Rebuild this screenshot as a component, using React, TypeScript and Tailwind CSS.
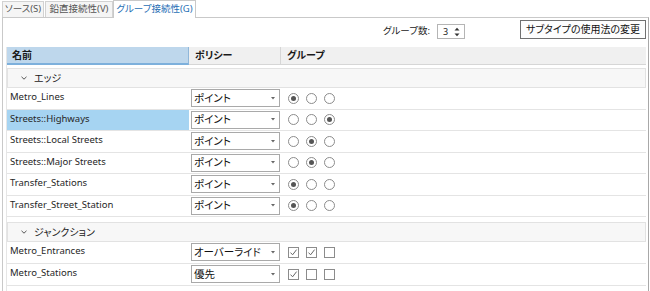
import React from "react";

type Row = { name: string; policy: string; kind: "radio" | "check"; vals: boolean[]; sel?: boolean };

const edges: Row[] = [
  { name: "Metro_Lines", policy: "ポイント", kind: "radio", vals: [true, false, false] },
  { name: "Streets::Highways", policy: "ポイント", kind: "radio", vals: [false, false, true], sel: true },
  { name: "Streets::Local Streets", policy: "ポイント", kind: "radio", vals: [false, true, false] },
  { name: "Streets::Major Streets", policy: "ポイント", kind: "radio", vals: [false, true, false] },
  { name: "Transfer_Stations", policy: "ポイント", kind: "radio", vals: [true, false, false] },
  { name: "Transfer_Street_Station", policy: "ポイント", kind: "radio", vals: [true, false, false] },
];

const junctions: Row[] = [
  { name: "Metro_Entrances", policy: "オーバーライド", kind: "check", vals: [true, true, false] },
  { name: "Metro_Stations", policy: "優先", kind: "check", vals: [true, false, false] },
];

function Radio({ on }: { on: boolean }) {
  return (
    <span className="flex h-[11px] w-[11px] items-center justify-center rounded-full border border-[#8c8c8c] bg-white">
      {on && <span className="h-[5px] w-[5px] rounded-full bg-[#555]" />}
    </span>
  );
}

function Check({ on }: { on: boolean }) {
  return (
    <span className="flex h-[11px] w-[11px] items-center justify-center border border-[#8c8c8c] bg-white">
      {on && (
        <svg width="9" height="9" viewBox="0 0 9 9">
          <path d="M1.5 4.6 L3.6 6.8 L7.6 1.6" fill="none" stroke="#666" strokeWidth="1" />
        </svg>
      )}
    </span>
  );
}

function Select({ text }: { text: string }) {
  return (
    <div className="flex h-[18px] w-[89px] items-center justify-between border border-[#a9a9a9] bg-white pl-[2px] pr-[4px]">
      <span className="text-[10.5px] leading-none text-[#111]">{text}</span>
      <svg width="4" height="3" viewBox="0 0 4 3">
        <path d="M0 0 L4 0 L2 2.6 Z" fill="#666" />
      </svg>
    </div>
  );
}

function GroupHeader({ label }: { label: string }) {
  return (
    <div className="flex h-[20px] items-center border border-[#e2e2e2] bg-[#f7f7f7]">
      <svg width="6" height="4" viewBox="0 0 6 4" className="ml-[13px]">
        <path d="M0.5 0.8 L3 3.2 L5.5 0.8" fill="none" stroke="#555" strokeWidth="1" />
      </svg>
      <span className="ml-[7px] text-[10px] text-[#1a1a1a]">{label}</span>
    </div>
  );
}

function DataRow({ r, h }: { r: Row; h: string }) {
  return (
    <div className={`flex border-b border-[#e4e4e4] ${h}`}>
      <div className={`w-[182px] pl-[3px] pt-[2px] text-[9.5px] leading-[14px] text-[#262626] ${r.sel ? "bg-[#a6d4f2]" : ""}`}>
        {r.name}
      </div>
      <div className="w-[92px] pl-[2px] pt-[1px]">
        <Select text={r.policy} />
      </div>
      <div className="flex items-start gap-[7px] pl-[7px] pt-[4.5px]">
        {r.vals.map((v, i) => (r.kind === "radio" ? <Radio key={i} on={v} /> : <Check key={i} on={v} />))}
      </div>
    </div>
  );
}

export default function App() {
  return (
    <div className="h-[291px] w-[650px] overflow-hidden bg-white [font-family:'Noto_Sans','Noto_Sans_CJK_JP',sans-serif] [font-feature-settings:'palt']">
      {/* tabs */}
      <div className="flex h-[17px] items-end pl-[2px]">
        <div className="flex h-[16px] w-[42px] items-center justify-center border border-b-0 border-[#d2d2d2] bg-[#f5f5f5] text-[9.5px] text-[#555]">
          ソース(S)
        </div>
        <div className="ml-[1px] flex h-[16px] w-[68px] items-center justify-center border border-b-0 border-[#d2d2d2] bg-[#f5f5f5] text-[9.5px] text-[#555]">
          鉛直接続性(V)
        </div>
        <div className="relative z-10 -mb-px flex h-[18px] w-[83px] items-center justify-center border border-b-0 border-[#c9c9c9] bg-white text-[9.5px] text-[#1f6fb5]">
          グループ接続性(G)
        </div>
      </div>

      {/* panel */}
      <div className="ml-[2px] h-[274px] w-[647px] border border-b-0 border-[#c9c9c9] border-r-[#a8a8a8]">
        <div className="flex h-[29px] items-start justify-end pr-[2px]">
          <span className="mt-[6px] text-[9.5px] leading-[14px] text-[#222]">グループ数:</span>
          <div className="ml-[7px] mt-[6px] flex h-[15px] w-[28px] items-center justify-between border border-[#b5b5b5] bg-white pl-[5px] pr-[4px]">
            <span className="text-[9px] leading-none text-[#222]">3</span>
            <svg width="6" height="10" viewBox="0 0 6 10">
              <path d="M0.5 3.5 L3 0.8 L5.5 3.5 Z" fill="#333" />
              <path d="M0.5 6.5 L3 9.2 L5.5 6.5 Z" fill="#333" />
            </svg>
          </div>
          <div className="ml-[55px] mt-[2px] flex h-[19px] w-[126px] items-center justify-center border border-[#707070] bg-[#fdfdfd] text-[10px] text-[#111]">
            サブタイプの使用法の変更
          </div>
        </div>

        {/* grid */}
        <div className="ml-[3px] mr-[2px] border-l border-[#e6e6e6]">
          <div className="flex h-[18px] text-[10px] font-bold text-[#1a1a1a]">
            <div className="flex w-[182px] items-center border-b-2 border-r border-b-[#7db0dc] border-r-[#8fb7da] bg-[#bed7ec] pl-[5px]">
              名前
            </div>
            <div className="flex w-[92px] items-center border-b border-r border-[#d6d6d6] bg-[#f0f0f0] pl-[6px]">
              ポリシー
            </div>
            <div className="flex flex-1 items-center border-b border-[#d6d6d6] bg-[#f0f0f0] pl-[6px]">
              グループ
            </div>
          </div>

          <div className="mt-[3px]">
            <GroupHeader label="エッジ" />
            {edges.map((r) => (
              <DataRow key={r.name} r={r} h="h-[21.5px]" />
            ))}
          </div>

          <div className="mt-[5px]">
            <GroupHeader label="ジャンクション" />
            {junctions.map((r) => (
              <DataRow key={r.name} r={r} h="h-[22px]" />
            ))}
            <div className="h-[22px] border-b border-[#e4e4e4]" />
          </div>
        </div>
      </div>
    </div>
  );
}
